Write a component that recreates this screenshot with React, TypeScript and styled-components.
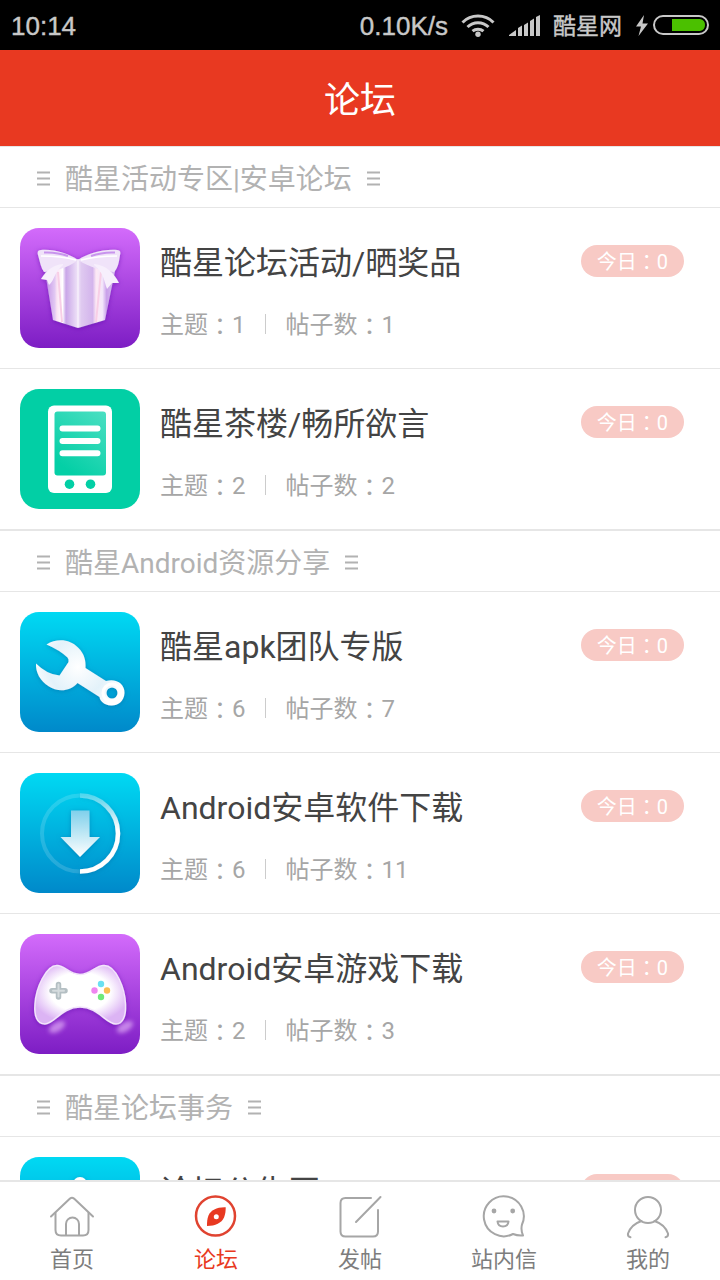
import React from "react";
import styled, { createGlobalStyle } from "styled-components";

const GlobalStyle = createGlobalStyle`
  * { box-sizing: border-box; }
  body {
    margin: 0;
    background: #fff;
    font-family: Roboto, "Noto Sans CJK SC", sans-serif;
  }
`;

const Screen = styled.div`
  display: flex;
  flex-direction: column;
  height: 100vh;
  background: #fff;
`;

const StatusBar = styled.div`
  flex: none;
  display: flex;
  align-items: center;
  justify-content: space-between;
  height: 50px;
  padding: 2px 11px 0;
  background: #000;
  color: #c8c8c8;
  font-family: "Liberation Sans", "Noto Sans CJK SC", sans-serif;
  font-size: 26px;
  line-height: 32px;
  -webkit-text-stroke: 0.4px #c8c8c8;
`;

const StatusGroup = styled.div`
  display: flex;
  align-items: center;
  gap: 13px;
  svg { display: block; }
`;

const Carrier = styled.span`
  font-size: 23px;
`;

const Header = styled.header`
  flex: none;
  display: flex;
  align-items: center;
  justify-content: center;
  height: 96px;
  padding-top: 6px;
  background: #e83921;
`;

const PageTitle = styled.h1`
  margin: 0;
  color: #fff;
  font-size: 36px;
  font-weight: 400;
  line-height: 48px;
`;

const Content = styled.main`
  flex: 1;
  min-height: 0;
  overflow-y: auto;
  scrollbar-width: none;
`;

const SectionTitle = styled.h2`
  display: flex;
  align-items: center;
  gap: 14px;
  height: 62px;
  margin: 0;
  padding: 6px 36px 0;
  border-top: 1px solid #e6e6e6;
  border-bottom: 1px solid #e6e6e6;
  color: #b2b2b2;
  font-size: 28px;
  font-weight: 400;
  line-height: 40px;
`;

const SectionMarkSvg = styled.svg`
  display: block;
  flex: none;
  margin-bottom: 4px;
`;

const ForumList = styled.ul`
  margin: 0;
  padding: 0;
  list-style: none;
`;

const ForumRow = styled.li`
  display: flex;
  gap: 20px;
  padding: 20px 36px 20px 20px;
  border-bottom: 1px solid #e6e6e6;
  svg { display: block; flex: none; }
`;

const ForumBody = styled.div`
  flex: 1;
  min-width: 0;
  display: flex;
  flex-direction: column;
  gap: 26px;
  padding-top: 15px;
`;

const ForumTop = styled.div`
  display: flex;
  align-items: flex-start;
  justify-content: space-between;
`;

const ForumName = styled.h3`
  margin: 0;
  color: #444;
  font-size: 32px;
  font-weight: 400;
  line-height: 40px;
`;

const TodayBadge = styled.span`
  display: flex;
  align-items: center;
  height: 32px;
  margin-top: 2px;
  padding: 2px 16px 0;
  border-radius: 16px;
  background: #f8cac5;
  color: #fff;
  font-size: 20px;
  line-height: 30px;
`;

const Stats = styled.div`
  display: flex;
  align-items: center;
  color: #a6a6a6;
  font-size: 24px;
  line-height: 32px;
`;

const Stat = styled.span`
  display: flex;
  align-items: center;
`;

const StatDivider = styled.span`
  width: 1px;
  height: 20px;
  margin: 0 20px 3px 19px;
  background: #ccc;
`;

/* The Traditional face sets the full-width colon in the middle of its box. */
const Colon = styled.span`
  font-family: "Noto Sans CJK TC", sans-serif;
  line-height: 1;
`;

const TabBar = styled.nav`
  flex: none;
  display: flex;
  height: 100px;
  border-top: 2px solid #e6e6e6;
  background: #fff;
`;

const Tab = styled.button<{ $active?: boolean }>`
  flex: 1;
  display: flex;
  flex-direction: column;
  align-items: center;
  gap: 6px;
  padding: 10px 0 0;
  border: 0;
  background: none;
  color: ${(p) => (p.$active ? "#e83921" : "#7d7d7d")};
  font-family: inherit;
  font-size: 22px;
  line-height: 28px;
  svg {
    display: block;
    color: ${(p) => (p.$active ? "#e04330" : "#a6a6a6")};
  }
`;

const SectionMark = () => (
  <SectionMarkSvg width="15" height="15" viewBox="0 0 15 15" stroke="currentColor" strokeWidth="1.800" aria-hidden="true">
    <path d="M1 1.500h13M1 7.500h13M1 13.500h13" />
  </SectionMarkSvg>
);

const WifiIcon = () => (
  <svg width="34" height="24" viewBox="0 0 34 24" fill="none" stroke="#c8c8c8" strokeWidth="3">
    <path d="M1.5 8.500a22 22 0 0 1 31 0" />
    <path d="M6.500 13a15 15 0 0 1 21 0" />
    <path d="M11.500 17.200a8.500 8.500 0 0 1 11 0" />
    <circle cx="17" cy="20.300" r="2.700" fill="#c8c8c8" stroke="none" />
  </svg>
);

const SignalIcon = () => (
  <svg width="32" height="22" viewBox="0 0 32 22" fill="#c8c8c8">
    <path d="M1 21v-1l7-5v6zM10 21v-8l4-2.500V21zM16 21V10l4-2.500V21zM22 21V6l4-2.500V21zM28 21V2l4-2v21z" />
  </svg>
);

const BatteryIcon = () => (
  <svg width="74" height="22" viewBox="0 0 74 22">
    <path d="M9 0L1 11.500h5L3.500 21 13 8.500H7.500z" fill="#c8c8c8" />
    <rect x="19" y="1" width="54" height="18" rx="9" fill="none" stroke="#c8c8c8" strokeWidth="2" />
    <path d="M37 4h28q5 1 5 6t-5 6H37z" fill="#4bc000" />
  </svg>
);

const tileColors = {
  purple: ["#d36bfb", "#7d1dc4"],
  green: ["#02cfa5", "#02cfa5"],
  blue: ["#00d9f3", "#0089ca"],
};

function Tile({ id, tone, children }: { id: string; tone: keyof typeof tileColors; children: React.ReactNode }) {
  const [from, to] = tileColors[tone];
  return (
    <svg width="120" height="120" viewBox="0 0 120 120" aria-hidden="true">
      <defs>
        <linearGradient id={id + "-bg"} x1="0" y1="0" x2="0" y2="1">
          <stop offset="0" stopColor={from} />
          <stop offset="1" stopColor={to} />
        </linearGradient>
        <filter id={id + "-shadow"} x="-20%" y="-20%" width="140%" height="140%">
          <feDropShadow dx="0" dy="1" stdDeviation="2.5" floodColor={tone === "purple" ? "#5a0ba8" : "#0070a8"} floodOpacity="0.55" />
        </filter>
      </defs>
      <rect width="120" height="120" rx="19" fill={`url(#${id}-bg)`} />
      {children}
    </svg>
  );
}

const GiftTile = () => (
  <Tile id="gift" tone="purple">
    <defs>
      <linearGradient id="gift-box" x1="0" x2="1">
        <stop offset="0" stopColor="#c08ee6" />
        <stop offset=".14" stopColor="#e2c9f3" />
        <stop offset=".17" stopColor="#fbe3f4" />
        <stop offset=".25" stopColor="#fff" />
        <stop offset=".3" stopColor="#c9a6e8" />
        <stop offset=".47" stopColor="#efe3f8" />
        <stop offset=".52" stopColor="#dfc9f0" />
        <stop offset=".68" stopColor="#d3b4ec" />
        <stop offset=".73" stopColor="#fde9f5" />
        <stop offset=".82" stopColor="#f3e6fa" />
        <stop offset=".88" stopColor="#c9a0ea" />
        <stop offset="1" stopColor="#dcc2f2" />
      </linearGradient>
    </defs>
    <g filter="url(#gift-shadow)">
      <path d="M25 43L58 31l37 12-10 49-27 8-25-8z" fill="url(#gift-box)" />
      <path d="M58 32v67" stroke="#f6eefb" strokeWidth="1.500" />
      <path d="M38 44l4 50M81 44l-5 50" stroke="#f8cfe6" strokeWidth="2" />
      <path d="M58 32C49 26 35 21 21 22c-3 0-4 2-3 5 2 7 3 13 6 17 9-1 23-3 34-12z" fill="#f0e3f9" />
      <path d="M58 32C67 26 82 21 97 22c3 0 4 2 3 5-1 7-2 13-6 17-9-1-24-4-36-12z" fill="#f0e3f9" />
      <path d="M24 24.500c9-.5 17 1 24 3.500M95 24.500c-9-.5-17 1-24 3.500" fill="none" stroke="#c894ed" strokeWidth="2" />
      <path d="M21 28c12 0 24 1 35 4M97 28c-12 0-24 1-36 4" fill="none" stroke="#fff" strokeWidth="1.500" />
      <path d="M43 36C33 37 27 42 21 51l6 1 2 5c6-5 5-13 14-20z" fill="#f7effc" />
      <path d="M74 36c12 1 20 9 25 19h-7l-5 6c-3-8-3-16-13-24z" fill="#f7effc" />
    </g>
  </Tile>
);

const PhoneTile = () => (
  <Tile id="phone" tone="green">
    <defs>
      <linearGradient id="phone-screen" x1="1" y1="0" x2=".4" y2="1">
        <stop offset="0" stopColor="#4bdfc2" />
        <stop offset="1" stopColor="#04cfa6" />
      </linearGradient>
    </defs>
    <rect x="28" y="16.500" width="64" height="87.500" rx="6" fill="#fff" />
    <rect x="34.500" y="22.500" width="51.500" height="64" rx="3" fill="url(#phone-screen)" />
    <path d="M42.500 39.500h35M42.500 52h35M42.500 64.300h35" stroke="#fff" strokeWidth="6" strokeLinecap="round" />
    <circle cx="49.500" cy="95.200" r="4.800" fill="#02cfa5" />
    <circle cx="70.500" cy="95.200" r="4.800" fill="#02cfa5" />
  </Tile>
);

const WrenchTile = () => (
  <Tile id="wrench" tone="blue">
    <defs>
      <radialGradient id="wrench-metal" cx="58" cy="55" r="48" gradientUnits="userSpaceOnUse">
        <stop offset="0" stopColor="#fff" />
        <stop offset=".6" stopColor="#e3f2fa" />
        <stop offset="1" stopColor="#fff" />
      </radialGradient>
    </defs>
    <path
      filter="url(#wrench-shadow)"
      fillRule="evenodd"
      fill="url(#wrench-metal)"
      d="M26.500 32.500C37 26 50 27 58.500 36c6 6 7.500 13 7 20l20.500 13C96 66 105 72 104.500 81 104 90 97 94 91 93.500 84 93 80 89 79.500 85L57.500 71C50 80 37 80 29 74.500 20 69 15.500 60 16 51.500q11 11 23.500 12L48.500 50q.5-3-1-4.500-8-7.500-21-13z M92 75.500a5.500 5.500 0 1 0 0 11 5.500 5.500 0 0 0 0-11z"
    />
    <circle cx="92" cy="81" r="9" fill="none" stroke="#fff" strokeWidth="3" />
  </Tile>
);

const DownloadTile = () => (
  <Tile id="download" tone="blue">
    <defs>
      <linearGradient id="download-ring" x1="0" y1="0" x2="0" y2="1">
        <stop offset="0" stopColor="#fff" stopOpacity=".3" />
        <stop offset=".45" stopColor="#fff" />
      </linearGradient>
      <linearGradient id="download-arrow" x1="0" y1="0" x2="0" y2="1">
        <stop offset="0" stopColor="#7fd0eb" />
        <stop offset="1" stopColor="#fff" />
      </linearGradient>
    </defs>
    <path d="M60 22.500a38 38 0 0 0 0 76" fill="none" stroke="#fff" strokeOpacity=".15" strokeWidth="4" />
    <g filter="url(#download-shadow)">
      <path d="M60 22.500a38 38 0 0 1 0 76" fill="none" stroke="url(#download-ring)" strokeWidth="4.500" />
      <path d="M51 37.500h18.500V64H80L60 84 40.500 64H51z" fill="url(#download-arrow)" />
    </g>
  </Tile>
);

const GamepadTile = () => (
  <Tile id="pad" tone="purple">
    <defs>
      <radialGradient id="pad-body" cx=".5" cy=".45" r=".55">
        <stop offset=".6" stopColor="#fff" />
        <stop offset="1" stopColor="#dcb4f4" />
      </radialGradient>
      <filter id="pad-glow" x="-50%" y="-50%" width="200%" height="200%">
        <feGaussianBlur stdDeviation="2" />
      </filter>
    </defs>
    <path
      filter="url(#pad-shadow)"
      fill="url(#pad-body)"
      stroke="#f3e4fc"
      strokeWidth="1.500"
      d="M37 31.500c8 0 12 9 23 9s15-9 24-9c12 0 21 23 21.500 39C106 82 103 90 96 90c-10 0-18-17-36-17S34 90 25 90c-8 0-11-8-10-20 1-16 11-38.500 22-38.500z"
    />
    <path d="M38.500 50.500v12.500M32 56.700h13" stroke="#b4bfc3" strokeWidth="5.500" strokeLinecap="round" />
    <path d="M38.500 50.500v12M33 56.700h11" stroke="#d5dcde" strokeWidth="2" strokeLinecap="round" />
    <circle cx="81" cy="50" r="3.200" fill="#6be0f2" />
    <circle cx="74.500" cy="56.500" r="3.200" fill="#ef86f0" />
    <circle cx="87" cy="56.500" r="3.200" fill="#fbbd55" />
    <circle cx="81" cy="63" r="3.200" fill="#6fe97a" />
    <g fill="#d9a2f3" fillOpacity=".75" filter="url(#pad-glow)">
      <ellipse cx="37" cy="93" rx="9" ry="4.500" transform="rotate(-30 37 93)" />
      <ellipse cx="105" cy="93" rx="9" ry="4.500" transform="rotate(-30 105 93)" />
    </g>
  </Tile>
);

const BellTile = () => (
  <Tile id="bell" tone="blue">
    <g filter="url(#bell-shadow)" fill="#fff">
      <circle cx="60" cy="27" r="7" />
      <path d="M34 82c8-8 4-50 26-50s18 42 26 50z" />
      <path d="M52 87h16a8 8 0 0 1-16 0z" />
    </g>
  </Tile>
);

const TabIcon = ({ children }: { children: React.ReactNode }) => (
  <svg
    width="48"
    height="48"
    viewBox="0 0 48 48"
    fill="none"
    stroke="currentColor"
    strokeWidth="2"
    strokeLinecap="round"
    strokeLinejoin="round"
    aria-hidden="true"
  >
    {children}
  </svg>
);

const tabs = [
  {
    label: "首页",
    icon: (
      <TabIcon>
        <path d="M3 24.500L22 6.600q2-1.600 4 0l19 17.900" />
        <path d="M7.500 21v17q0 5.500 5.500 5.500h22q5.500 0 5.500-5.500V21" />
        <path d="M18 43V32a6.500 6.500 0 0 1 13 0v11" />
      </TabIcon>
    ),
  },
  {
    label: "论坛",
    active: true,
    icon: (
      <TabIcon>
        <circle cx="23.500" cy="24" r="19.500" strokeWidth="2.500" />
        <path
          d="M33.700 15.300C25 15 19 18 16.500 23.500c-1.500 3.500-1.500 7-1.500 10.500 8.500 0 14.500-3 17-8.500 1.500-3.500 1.700-6.700 1.700-10.200z"
          fill="#e83921"
          stroke="none"
        />
        <circle cx="24.300" cy="24.700" r="2.500" fill="#fff" stroke="none" />
      </TabIcon>
    ),
  },
  {
    label: "发帖",
    icon: (
      <TabIcon>
        <path d="M35 6H9.500Q4.500 6 4.500 11v28.500q0 5 5 5h27.500q5 0 5-5V18" />
        <path d="M44.500 5L20 30" />
      </TabIcon>
    ),
  },
  {
    label: "站内信",
    icon: (
      <TabIcon>
        <path d="M33 42A20 20 0 1 1 42 32.500C40.800 37 41.500 40 43 43.500c-4 .3-6.500 0-10-1.500z" />
        <circle cx="14" cy="19" r="2.400" fill="currentColor" stroke="none" />
        <circle cx="32.700" cy="19" r="2.400" fill="currentColor" stroke="none" />
        <path d="M17.500 29.500h11q-.5 5-5.500 5t-5.500-5z" />
      </TabIcon>
    ),
  },
  {
    label: "我的",
    icon: (
      <TabIcon>
        <circle cx="24" cy="18" r="13" />
        <path d="M17.500 29C10 31.500 6 36 4 41.500q-.6 3 2.500 3.800M30.500 29C38 31.500 42 36 44 41.500q.6 3-2.500 3.800" />
      </TabIcon>
    ),
  },
];

type Forum = {
  name: string;
  icon: React.ReactNode;
  stats?: { topics: number; posts: number };
};

const sections: { title: string; forums: Forum[] }[] = [
  {
    title: "酷星活动专区|安卓论坛",
    forums: [
      { name: "酷星论坛活动/晒奖品", stats: { topics: 1, posts: 1 }, icon: <GiftTile /> },
      { name: "酷星茶楼/畅所欲言", stats: { topics: 2, posts: 2 }, icon: <PhoneTile /> },
    ],
  },
  {
    title: "酷星Android资源分享",
    forums: [
      { name: "酷星apk团队专版", stats: { topics: 6, posts: 7 }, icon: <WrenchTile /> },
      { name: "Android安卓软件下载", stats: { topics: 6, posts: 11 }, icon: <DownloadTile /> },
      { name: "Android安卓游戏下载", stats: { topics: 2, posts: 3 }, icon: <GamepadTile /> },
    ],
  },
  {
    title: "酷星论坛事务",
    forums: [{ name: "论坛公告区", icon: <BellTile /> }],
  },
];

export default function App() {
  return (
    <>
      <GlobalStyle />
      <Screen>
        <StatusBar>
          <span>10:14</span>
          <StatusGroup>
            <span>0.10K/s</span>
            <WifiIcon />
            <SignalIcon />
            <Carrier>酷星网</Carrier>
            <BatteryIcon />
          </StatusGroup>
        </StatusBar>
        <Header>
          <PageTitle>论坛</PageTitle>
        </Header>
        <Content>
          {sections.map((section) => (
            <section key={section.title}>
              <SectionTitle>
                <SectionMark />
                <span>{section.title}</span>
                <SectionMark />
              </SectionTitle>
              <ForumList>
                {section.forums.map((forum) => (
                  <ForumRow key={forum.name}>
                    {forum.icon}
                    <ForumBody>
                      <ForumTop>
                        <ForumName>{forum.name}</ForumName>
                        <TodayBadge>
                          今日<Colon>：</Colon>0
                        </TodayBadge>
                      </ForumTop>
                      {forum.stats && (
                        <Stats>
                          <Stat>
                            主题<Colon>：</Colon>
                            {forum.stats.topics}
                          </Stat>
                          <StatDivider />
                          <Stat>
                            帖子数<Colon>：</Colon>
                            {forum.stats.posts}
                          </Stat>
                        </Stats>
                      )}
                    </ForumBody>
                  </ForumRow>
                ))}
              </ForumList>
            </section>
          ))}
        </Content>
        <TabBar>
          {tabs.map((tab) => (
            <Tab key={tab.label} type="button" $active={tab.active}>
              {tab.icon}
              {tab.label}
            </Tab>
          ))}
        </TabBar>
      </Screen>
    </>
  );
}
